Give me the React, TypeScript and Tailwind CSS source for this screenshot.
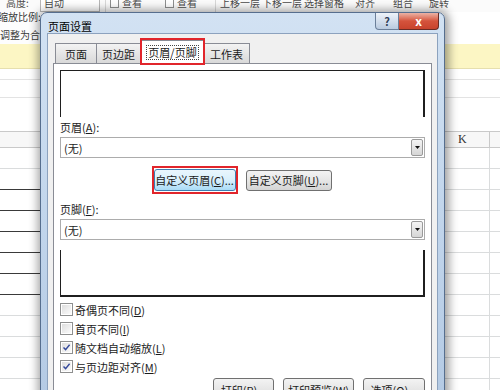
import React from 'react';

const FONT = "font-['Noto_Sans_CJK_SC','Noto_Sans',sans-serif]";

const Key: React.FC<{ k: string }> = ({ k }) => <span className="underline underline-offset-[1px]">{k}</span>;

const CheckRow: React.FC<{ text: string; k: string; checked?: boolean }> = ({ text, k, checked }) => (
  <div className="flex h-[19px] items-center gap-[2px]">
    <span className="flex h-[13px] w-[13px] items-center justify-center border border-[#8e8f8f] bg-white">
      <span className="flex h-[9px] w-[9px] items-center justify-center bg-gradient-to-br from-[#dedede] to-[#fbfbfb]">
        {checked && (
          <svg width="9" height="9" viewBox="0 0 9 9">
            <path d="M1.5 4.5 L3.6 6.6 L7.6 1.8" stroke="#33489a" strokeWidth="1.4" fill="none" />
          </svg>
        )}
      </span>
    </span>
    <span>
      {text}(<Key k={k} />)
    </span>
  </div>
);

const Btn: React.FC<{ className: string; hot?: boolean; children: React.ReactNode }> = ({ className, hot, children }) => (
  <div
    className={`flex items-center justify-center whitespace-nowrap rounded-[3px] border ${
      hot
        ? 'border-[#3c7fb1] bg-gradient-to-b from-[#eaf6fd] via-[#d9f0fc] to-[#a9dbf6]'
        : 'border-[#707070] bg-gradient-to-b from-[#f3f3f3] via-[#e6e6e6] to-[#d4d4d4]'
    } ${className}`}
  >
    {children}
  </div>
);

const Dropdown: React.FC = () => (
  <div className="flex h-[21px] items-center justify-between border border-[#acacac] bg-white pl-[3px] pr-[1px]">
    <span>(无)</span>
    <span className="flex h-[17px] w-[12px] items-center justify-center rounded-[2px] border border-[#9a9a9a] bg-gradient-to-b from-[#f4f4f4] to-[#d6d6d6]">
      <svg width="5" height="3" viewBox="0 0 5 3">
        <path d="M0 0h5L2.5 3z" fill="#111" />
      </svg>
    </span>
  </div>
);

const GridRow: React.FC<{ dark?: boolean }> = ({ dark }) => (
  <div className="flex h-[21px]">
    <div className={`w-[40px] border-b ${dark ? 'border-[#3a3a3a]' : 'border-[#dadcdd]'}`} />
    <div className="flex-1" />
    <div className="w-[45px] border-b border-r border-[#dadcdd]" />
    <div className="w-[10px] border-b border-[#dadcdd]" />
  </div>
);

const App: React.FC = () => {
  return (
    <div className={`relative h-[390px] w-[500px] overflow-hidden bg-white text-[11px] leading-[14px] text-[#1b1b1b] ${FONT}`}>
      {/* excel behind the dialog */}
      <div className="h-[12px] overflow-hidden bg-[#fbfbfb] text-[10px] text-[#4a4a4a]">
        <div className="-mt-[6px] flex h-[18px] items-center">
          <span className="w-[40px] pl-[6px]">高度:</span>
          <span className="flex h-[17px] w-[60px] items-center border border-[#b7b7b7] bg-white pl-[3px]">自动</span>
          <span className="ml-[5px] h-[18px] border-l border-[#d8d8d8]" />
          <span className="ml-[4px] flex w-[50px] items-center gap-[3px]">
            <span className="h-[9px] w-[9px] border border-[#8e8f8f] bg-white" />查看
          </span>
          <span className="ml-[5px] flex w-[50px] items-center gap-[3px]">
            <span className="h-[9px] w-[9px] border border-[#8e8f8f] bg-white" />查看
          </span>
          <span className="h-[18px] border-l border-[#d8d8d8]" />
          <span className="ml-[4px] flex gap-[2px]">
            <span>上移一层</span>
            <span>下移一层</span>
            <span>选择窗格</span>
            <span className="ml-[9px]">对齐</span>
            <span className="ml-[16px]">组合</span>
            <span className="ml-[14px]">旋转</span>
          </span>
        </div>
      </div>
      <div className="flex h-[32px] w-[40px] flex-col overflow-hidden whitespace-nowrap bg-[#fdfdfd] text-[10px] text-[#3a3a3a]">
        <span className="-mt-[2px] h-[14px] -ml-[2px]">缩放比例:</span>
        <span className="mt-[4px] h-[14px]">调整为合适大小</span>
      </div>
      <div className="h-[25px] border-b border-[#e6dfae] bg-[#fcf6c4]" />
      <div className="h-[11px] border-b border-[#e3e3e3]" />
      <div className="h-[18px] border-b border-[#e3e3e3]" />
      <div className="h-[33px]" />
      <div className="flex h-[17px] border-y border-[#c9c9c9] bg-[#f7f7f7]">
        <div className="w-[40px]" />
        <div className="flex-1" />
        <div className="w-[45px] border-r border-[#c9c9c9] pl-[13px] font-['Liberation_Serif',serif] text-[12px] leading-[15px] text-[#333]">
          K
        </div>
        <div className="w-[10px]" />
      </div>
      <GridRow />
      <GridRow dark />
      <GridRow dark />
      <GridRow dark />
      <GridRow dark />
      <GridRow dark />
      <GridRow dark />
      <GridRow />
      <GridRow />
      <GridRow />
      <GridRow />
      <GridRow />

      {/* page setup dialog */}
      <div className="absolute left-[40px] top-[12px] flex h-[392px] w-[405px] flex-col rounded-t-[7px] border border-[#566e8e] bg-gradient-to-b from-[#d2e2f3] via-[#c2d6ec] to-[#b4cae4] shadow-[1px_1px_10px_3px_rgba(0,0,0,0.38)]">
        <div className="flex h-[23px] items-start justify-between">
          <span className="mt-[6px] pl-[7px] text-[11px] text-black">页面设置</span>
          <div className="mr-[5px] flex">
            <div className="flex h-[17px] w-[24px] items-center justify-center rounded-bl-[4px] border border-t-0 border-[#6b7f99] bg-gradient-to-b from-[#eef3f9] to-[#b9cadf] text-[11px] font-bold text-[#2f3e55]">
              ?
            </div>
            <div className="flex h-[17px] w-[40px] items-center justify-center rounded-br-[4px] border border-l-0 border-t-0 border-[#6a2b24] bg-gradient-to-b from-[#eab2a5] via-[#d5533c] to-[#c8432d] text-[12px] font-bold leading-none text-white">
              x
            </div>
          </div>
        </div>

        <div className="mx-[6px] flex flex-1 flex-col border border-[#8ca2be] bg-[#f0f0f0] px-[5px]">
          {/* tabs */}
          <div className="mt-[6px] flex h-[23px] items-end pl-[2px]">
            <div className="flex h-[20px] w-[42px] items-center justify-center border border-b-0 border-[#898c95] bg-gradient-to-b from-[#f3f3f3] to-[#d9d9d9]">
              页面
            </div>
            <div className="flex h-[20px] w-[44px] items-center justify-center border border-b-0 border-l-0 border-[#898c95] bg-gradient-to-b from-[#f3f3f3] to-[#d9d9d9]">
              页边距
            </div>
            <div className="relative z-10 -mb-px flex h-[24px] w-[63px] items-center justify-center border border-b-0 border-[#898c95] bg-white">
              <span className="border border-dotted border-[#444] px-[1px] leading-[13px]">页眉/页脚</span>
              <span className="absolute -left-[2px] -right-[2px] -top-[3px] -bottom-[1px] border-2 border-[#e1252b]" />
            </div>
            <div className="flex h-[20px] w-[46px] items-center justify-center border border-b-0 border-l-0 border-[#898c95] bg-gradient-to-b from-[#f3f3f3] to-[#d9d9d9]">
              工作表
            </div>
          </div>

          {/* panel */}
          <div className="flex flex-1 flex-col border border-[#898c95] bg-white px-[6px] pt-[6px]">
            <div className="h-[47px] border-l border-r-2 border-t border-[#1f1f1f]" />
            <div className="flex h-[20px] items-center">
              页眉(<Key k="A" />):
            </div>
            <Dropdown />
            <div className="mt-[11px] flex h-[22px] items-center justify-center gap-[10px]">
              <div className="relative">
                <Btn hot className="h-[22px] w-[82px]">
                  自定义页眉(<Key k="C" />)...
                </Btn>
                <span className="absolute -left-[2px] -right-[2px] -top-[3px] -bottom-[3px] border-2 border-[#e1252b]" />
              </div>
              <Btn className="h-[21px] w-[86px]">
                自定义页脚(<Key k="U" />)...
              </Btn>
            </div>
            <div className="mt-[8px] flex h-[20px] items-center">
              页脚(<Key k="F" />):
            </div>
            <Dropdown />
            <div className="mt-[10px] h-[47px] border-b-2 border-l border-r-2 border-[#1f1f1f]" />
            <div className="mt-[3px] flex flex-col">
              <CheckRow text="奇偶页不同" k="D" />
              <CheckRow text="首页不同" k="I" />
              <CheckRow text="随文档自动缩放" k="L" checked />
              <CheckRow text="与页边距对齐" k="M" checked />
            </div>
            <div className="mt-[2px] flex justify-end gap-[9px]">
              <Btn className="h-[23px] w-[61px]">
                打印(<Key k="P" />)...
              </Btn>
              <Btn className="h-[23px] w-[71px]">
                打印预览(<Key k="W" />)
              </Btn>
              <Btn className="h-[23px] w-[62px]">
                选项(<Key k="O" />)...
              </Btn>
            </div>
          </div>
        </div>
      </div>
    </div>
  );
};

export default App;
